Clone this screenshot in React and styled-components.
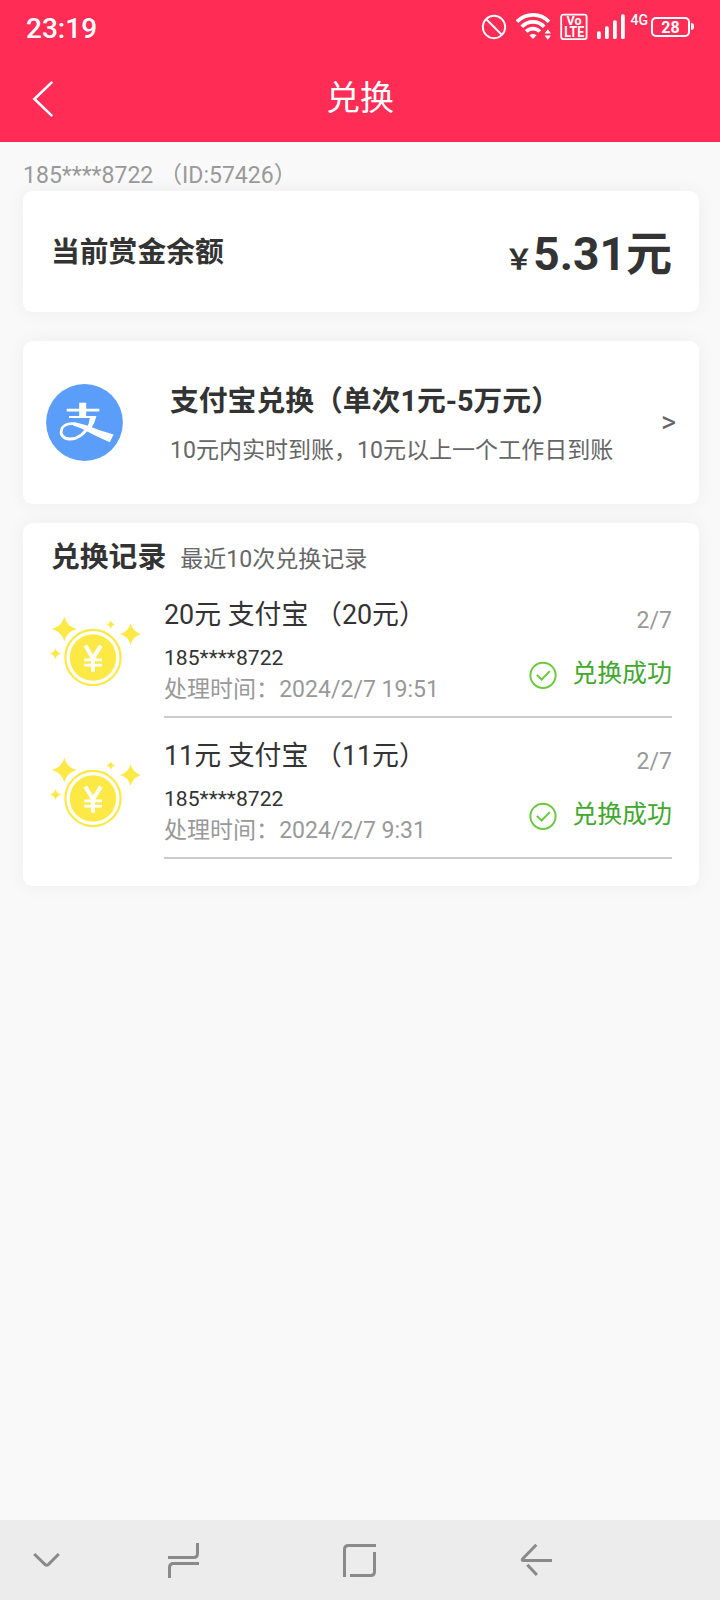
import React from 'react';
import styled, { createGlobalStyle } from 'styled-components';

const records = [
  { id: 1, title: '20元 支付宝 （20元）', phone: '185****8722', time: '2024/2/7 19:51', date: '2/7' },
  { id: 2, title: '11元 支付宝 （11元）', phone: '185****8722', time: '2024/2/7 9:31', date: '2/7' },
];

function StatusIcons() {
  return (
    <StatusRight>
      <svg width="26" height="26" viewBox="0 0 26 26" fill="none" stroke="#fff" strokeWidth="1.9">
        <circle cx="13" cy="13" r="11.2" />
        <path d="M5 5l16 16" />
      </svg>
      <WifiSvg width="36" height="28" viewBox="0 0 36 28" fill="none" stroke="#fff" strokeWidth="3.7">
        <path d="M1 8.7C10 -0.4 24 -0.4 33 8.7" />
        <path d="M5.8 13.8C12 7.2 22 7.2 28.2 13.8" />
        <path d="M10.2 18.6C14 14.6 20 14.6 23.8 18.6" />
        <path d="M13.4 22.3Q17 19.6 20.6 22.3L17 26z" fill="#fff" stroke="none" />
        <path d="M28.6 20.5l3.2-4.3 3.2 4.3zM28.6 22.5l3.2 4.3 3.2-4.3z" fill="#fff" stroke="none" />
      </WifiSvg>
      <VolteSvg width="28" height="28" viewBox="0 0 28 28">
        <rect x="1.2" y="1.7" width="25.4" height="24.4" rx="2" fill="none" stroke="#fff" strokeWidth="1.8" />
        <text x="6.5" y="12.4" fontSize="12" textLength="15" lengthAdjust="spacingAndGlyphs">Vo</text>
        <text x="4.2" y="24.2" fontSize="14" textLength="20" lengthAdjust="spacingAndGlyphs">LTE</text>
      </VolteSvg>
      <SignalSvg width="30" height="26" viewBox="0 0 30 26" fill="#fff">
        <rect x="1" y="17.3" width="3.8" height="7.7" rx="1.6" />
        <rect x="9" y="12.3" width="3.8" height="12.7" rx="1.6" />
        <rect x="17" y="6.3" width="3.8" height="18.7" rx="1.6" />
        <rect x="25" y="0.3" width="3.8" height="24.7" rx="1.6" />
      </SignalSvg>
      <Network width="19" height="22" viewBox="0 0 19 22">
        <text x="0.4" y="16" textLength="17.6" lengthAdjust="spacingAndGlyphs">4G</text>
      </Network>
      <Battery>28</Battery>
      <BatteryNub />
    </StatusRight>
  );
}

function AlipayIcon() {
  return (
    <svg width="77" height="77" viewBox="0 0 77 77">
      <circle cx="38.5" cy="38.5" r="38.4" fill="#5b9ef9" />
      <path d="M20.7 24.7H33.2V18.8H40.2V24.7H53.3V27.4H40.2V32H50.4Q48.8 39 45.4 44L41.6 43Q43.2 38.6 43.8 34H23V32H33.2V27.4H20.7z" fill="#fff" />
      <path d="M44.4 40C39.5 49 31.5 55.4 23.5 55C16.5 54.6 14.2 50 15.5 45.8C17.4 39.2 26 38.6 32 40.8" fill="none" stroke="#fff" strokeWidth="2.8" />
      <path d="M28 38.3Q33 38.8 45 43Q54 46.6 67.6 50.4L63.8 58.2Q50 52.4 40 46.8Q33 43 27 41.4z" fill="#fff" />
    </svg>
  );
}

const star = (x, y, r) => {
  const k = r * 0.2;
  return `M${x} ${y - r}Q${x + k} ${y - k} ${x + r} ${y}Q${x + k} ${y + k} ${x} ${y + r}Q${x - k} ${y + k} ${x - r} ${y}Q${x - k} ${y - k} ${x} ${y - r}z`;
};

function CoinIcon() {
  return (
    <svg width="100" height="90" viewBox="0 0 100 90">
      <g fill="#fce945">
        <path d={star(24.3, 29, 12.4)} />
        <path d={star(90.6, 34.1, 10.8)} />
        <path d={star(70.8, 24.6, 4.4)} />
        <path d={star(15.5, 53.6, 5.6)} />
        <circle cx="53" cy="57.5" r="23.2" />
      </g>
      <circle cx="53" cy="57.5" r="27.6" fill="none" stroke="#fce945" strokeWidth="2.2" />
      <path d="M45.4 45.6L53 58.6L60.8 45.6M53 58V71.8" fill="none" stroke="#fff" strokeWidth="4" />
      <path d="M44.2 59.8H62M44.2 65.2H62" fill="none" stroke="#fff" strokeWidth="2.8" />
    </svg>
  );
}

function CheckIcon() {
  return (
    <svg width="28" height="28" viewBox="0 0 28 28" fill="none" stroke="#6cca3c" strokeWidth="2">
      <circle cx="14" cy="14.3" r="12.6" />
      <path d="M7.8 13.9l4.8 4.6 8.2-8.4" />
    </svg>
  );
}

export default function App() {
  return (
    <>
      <GlobalStyle />
      <Page>
        <Header>
          <StatusBar>
            <Clock>23:19</Clock>
            <StatusIcons />
          </StatusBar>
          <TitleBar>
            <svg width="24" height="38" viewBox="0 0 24 38">
              <path d="M20.5 2.6L3.4 19l17.1 16.4" fill="none" stroke="#fff" strokeWidth="2.6" strokeLinecap="round" />
            </svg>
            <Title>兑换</Title>
            <TitleSide />
          </TitleBar>
        </Header>

        <Content>
          <UserLine>185****8722 （ID:57426）</UserLine>

          <BalanceCard>
            <Label>当前赏金余额</Label>
            <Amount>
              <Yen>￥</Yen>5.31元
            </Amount>
          </BalanceCard>

          <ChannelCard>
            <AlipayIcon />
            <ChannelText>
              <ChannelName>支付宝兑换（单次1元-5万元）</ChannelName>
              <ChannelHint>10元内实时到账，10元以上一个工作日到账</ChannelHint>
            </ChannelText>
            <Arrow>&gt;</Arrow>
          </ChannelCard>

          <RecordCard>
            <RecordHead>
              <Label>兑换记录</Label>
              <RecordHint>最近10次兑换记录</RecordHint>
            </RecordHead>
            {records.map((item) => (
              <RecordRow key={item.id}>
                <CoinIcon />
                <RecordBody>
                  <RecordInfo>
                    <RecordTitle>{item.title}</RecordTitle>
                    <RecordPhone>{item.phone}</RecordPhone>
                    <RecordTime>处理时间：{item.time}</RecordTime>
                  </RecordInfo>
                  <RecordState>
                    <RecordDate>{item.date}</RecordDate>
                    <Success>
                      <CheckIcon />
                      <SuccessText>兑换成功</SuccessText>
                    </Success>
                  </RecordState>
                </RecordBody>
              </RecordRow>
            ))}
          </RecordCard>
        </Content>

        <SystemNav>
          <NavSvg width="28" height="36" viewBox="0 0 28 36" $left={32}>
            <path d="M2.2 11L12.9 21.4Q14.7 23 16.5 21.4L26.8 11" />
          </NavSvg>
          <NavSvg width="34" height="36" viewBox="0 0 34 36" $left={106}>
            <path d="M31.5 0V10.5Q31.5 14.5 27.5 14.5H2M3.5 35V24.5Q3.5 20.5 7.5 20.5H33" />
          </NavSvg>
          <NavSvg width="36" height="36" viewBox="0 0 36 36" $left={142}>
            <path d="M34 2.5H6.5Q2.5 2.5 2.5 6.5V34M32.5 9V28.5Q32.5 32.5 28.5 32.5H8" />
          </NavSvg>
          <NavSvg width="34" height="36" viewBox="0 0 34 36" $left={142}>
            <path d="M16.3 1.8L3 15.4Q1.2 17.5 3.6 17.5H32M7.3 21.7L16.9 32" />
          </NavSvg>
        </SystemNav>
      </Page>
    </>
  );
}

const GlobalStyle = createGlobalStyle`
  * {
    box-sizing: border-box;
  }
  body {
    margin: 0;
    background: #f9f9f9;
    color: #333;
    font-family: Roboto, 'Noto Sans CJK SC', sans-serif;
  }
  svg {
    display: block;
    flex: none;
  }
`;

const Page = styled.div`
  width: 720px;
  height: 1600px;
  display: flex;
  flex-direction: column;
  overflow: hidden;
  background: #f9f9f9;
`;

const Header = styled.header`
  height: 142px;
  flex: none;
  background: #ff2d55;
  color: #fff;
`;

const StatusBar = styled.div`
  height: 56px;
  padding: 0 26px;
  display: flex;
  justify-content: space-between;
`;

const Clock = styled.div`
  font-size: 28px;
  font-weight: 500;
  line-height: 57px;
`;

const StatusRight = styled.div`
  display: flex;
  align-items: flex-start;
  padding-top: 14px;
`;

const WifiSvg = styled.svg`
  margin: -1px 0 0 9px;
`;

const VolteSvg = styled.svg`
  margin: -1px 0 0 8px;
  text {
    fill: #fff;
    font-weight: 700;
  }
`;

const SignalSvg = styled.svg`
  margin-left: 8px;
`;

const Network = styled.svg`
  margin: -5px 0 0 4px;
  text {
    fill: #fff;
    font-size: 15px;
    font-weight: 500;
  }
`;

const Battery = styled.div`
  width: 39px;
  height: 20px;
  margin: 3px 0 0 2px;
  border: 2px solid #fff;
  border-radius: 5px;
  font-size: 16px;
  font-weight: 700;
  line-height: 17px;
  text-align: center;
`;

const BatteryNub = styled.div`
  width: 3px;
  height: 7px;
  margin: 9px 0 0 1px;
  border-radius: 0 4px 4px 0;
  background: #fff;
`;

const TitleBar = styled.div`
  height: 86px;
  padding: 0 31px;
  display: flex;
  align-items: center;
`;

const Title = styled.h1`
  flex: 1;
  margin: 0;
  font-size: 34px;
  font-weight: 400;
  line-height: 84px;
  padding-bottom: 2px;
  text-align: center;
`;

const TitleSide = styled.div`
  width: 24px;
`;

const Content = styled.main`
  flex: 1;
  padding: 18px 21px 0 23px;
`;

const UserLine = styled.div`
  font-size: 23.04px;
  line-height: 31px;
  color: #999;
  white-space: pre;
`;

const Card = styled.section`
  border-radius: 9.6px;
  background: #fff;
  box-shadow: 0 0 19px rgba(0, 0, 0, 0.05);
`;

const BalanceCard = styled(Card)`
  height: 121px;
  padding: 0 27px 0 28px;
  display: flex;
  justify-content: space-between;
  align-items: center;
`;

const Label = styled.div`
  font-size: 28.8px;
  font-weight: 700;
  line-height: 42px;
`;

const Amount = styled.div`
  padding-top: 10px;
  font-size: 46.08px;
  font-weight: 700;
  line-height: 60px;
`;

const Yen = styled.span`
  font-size: 28.8px;
`;

const ChannelCard = styled(Card)`
  height: 163px;
  margin-top: 29px;
  padding: 0 23px;
  display: flex;
  align-items: center;
`;

const ChannelText = styled.div`
  flex: 1;
  margin: 6px 0 0 47px;
  white-space: nowrap;
`;

const ChannelName = styled.div`
  font-size: 28.8px;
  font-weight: 700;
  line-height: 50px;
`;

const ChannelHint = styled.div`
  font-size: 23.04px;
  line-height: 49px;
  color: #666;
`;

const Arrow = styled.div`
  padding-bottom: 2px;
  font-size: 28.8px;
  line-height: 40px;
  color: #666;
`;

const RecordCard = styled(Card)`
  height: 363px;
  margin-top: 19px;
  padding: 13px 27px 0 28px;
`;

const RecordHead = styled.div`
  height: 41px;
  display: flex;
  align-items: baseline;
`;

const RecordHint = styled.div`
  margin-left: 14px;
  font-size: 23.04px;
  color: #666;
`;

const RecordRow = styled.div`
  height: 141px;
  margin-left: -11px;
  display: flex;
  > svg {
    margin: 23px 24px 0 0;
  }
`;

const RecordBody = styled.div`
  flex: 1;
  display: flex;
  justify-content: space-between;
  border-bottom: 2px solid #ccc;
`;

const RecordInfo = styled.div`
  padding-top: 19px;
  white-space: pre;
`;

const RecordTitle = styled.div`
  margin-bottom: 9px;
  font-size: 26.88px;
  line-height: 38px;
`;

const RecordPhone = styled.div`
  margin-bottom: 1px;
  font-size: 21.12px;
  line-height: 30px;
`;

const RecordTime = styled.div`
  font-size: 23.04px;
  line-height: 32px;
  color: #999;
`;

const RecordState = styled.div`
  padding-top: 29px;
  display: flex;
  flex-direction: column;
  align-items: flex-end;
`;

const RecordDate = styled.div`
  margin-bottom: 20px;
  font-size: 23.04px;
  line-height: 30px;
  color: #999;
`;

const Success = styled.div`
  display: flex;
  color: #41a82e;
  svg {
    margin: 5px 15.6px 0 0;
  }
`;

const SuccessText = styled.div`
  font-size: 24.96px;
  line-height: 36px;
`;

const SystemNav = styled.nav`
  height: 80px;
  flex: none;
  display: flex;
  padding-top: 23px;
  background: #ececec;
`;

const NavSvg = styled.svg`
  margin-left: ${({ $left }) => $left}px;
  fill: none;
  stroke: #8a8a8a;
  stroke-width: 3;
`;
